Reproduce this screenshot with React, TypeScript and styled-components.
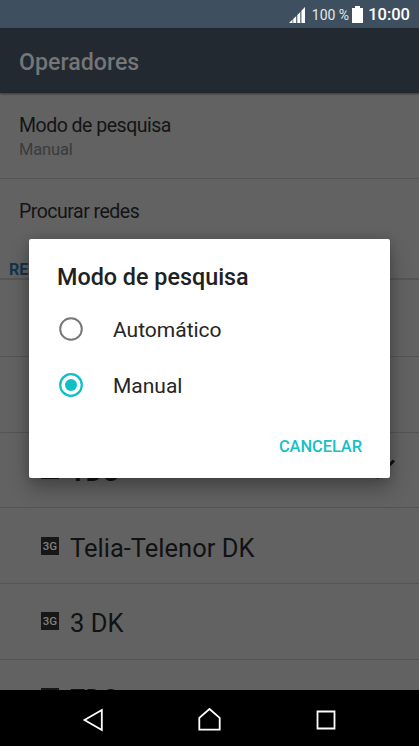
import React from "react";
import styled, { createGlobalStyle } from "styled-components";

const GlobalStyle = createGlobalStyle`
  * { box-sizing: border-box; }
  body { margin: 0; background: #000; font-family: Roboto, sans-serif; }
`;

const Screen = styled.div`
  position: relative;
  width: 419px;
  height: 746px;
  overflow: hidden;
  display: flex;
  flex-direction: column;
  background: #626262;
`;

const StatusBar = styled.header`
  height: 28px;
  flex: none;
  display: flex;
  align-items: center;
  justify-content: flex-end;
  padding-right: 9px;
  background: #3e505f;
  color: #fff;
`;

const BatteryLevel = styled.span`
  margin: 2px 3px 0 6px;
  font-size: 14px;
  line-height: 20px;
  white-space: nowrap;
  color: #e4e8ea;
`;

const Clock = styled.span`
  margin: 2px 0 0 5px;
  font-size: 16.5px;
  font-weight: 500;
  line-height: 20px;
`;

const AppBar = styled.div`
  height: 65px;
  flex: none;
  display: flex;
  align-items: center;
  padding: 3px 19px 0;
  background: #222930;
  box-shadow: 0 1px 2px rgba(0, 0, 0, 0.45);
  z-index: 1;
`;

const AppTitle = styled.h1`
  margin: 0;
  font-size: 23.2px;
  font-weight: 500;
  color: #747678;
`;

const Content = styled.main`
  flex: 1;
  min-height: 0;
  overflow: hidden;
`;

const Preference = styled.div<{ $height: number; $line?: boolean }>`
  height: ${(p) => p.$height}px;
  padding: 21px 19px 0;
  border-bottom: ${(p) => (p.$line ? "1px solid #545454" : "none")};
`;

const PreferenceTitle = styled.div`
  font-size: 19.5px;
  letter-spacing: -0.5px;
  line-height: 24px;
  color: #141414;
`;

const PreferenceSummary = styled.div`
  padding-top: 1px;
  font-size: 16.5px;
  letter-spacing: -0.15px;
  line-height: 22px;
  color: #3b3b3b;
`;

const SectionHeader = styled.div`
  height: 21px;
  padding-left: 9px;
  border-bottom: 2px solid #555;
  font-size: 16px;
  font-weight: 700;
  line-height: 22px;
  color: #15334a;
`;

const NetworkRow = styled.div`
  height: 75.75px;
  display: flex;
  align-items: center;
  padding: 1px 23px 0 41px;
  border-bottom: 1px solid #545454;

  &:first-of-type { margin-top: 1px; }
`;

const NetworkList = styled.div`
  display: flow-root;
`;

const NetworkBadge = styled.span`
  width: 18px;
  height: 18px;
  margin: 0 11px 1px 0;
  background: #171717;
  color: #808080;
  font-size: 11.5px;
  font-weight: 500;
  line-height: 19px;
  text-align: center;
`;

const NetworkName = styled.span<{ $bold?: boolean }>`
  flex: 1;
  padding-top: 3px;
  font-size: 25.5px;
  font-weight: ${(p) => (p.$bold ? 700 : 400)};
  line-height: 32px;
  color: #121212;
`;

const NavBar = styled.nav`
  height: 56px;
  flex: none;
  background: #000;
  svg { display: block; }
`;

const Dialog = styled.section`
  position: absolute;
  left: 29px;
  top: 239px;
  width: 361px;
  height: 239px;
  z-index: 2;
  display: flex;
  flex-direction: column;
  padding: 22px 28px 0;
  border-radius: 2px;
  background: #fff;
  box-shadow: 0 10px 20px rgba(0, 0, 0, 0.3), 0 0 8px rgba(0, 0, 0, 0.15);
`;

const DialogTitle = styled.h2`
  margin: 0 0 10px;
  font-size: 23.35px;
  font-weight: 500;
  line-height: 32px;
  color: #212121;
`;

const Option = styled.div`
  height: 56px;
  flex: none;
  display: flex;
  align-items: center;
  gap: 29px;
  padding: 0 0 4px 1px;
  color: #252525;
`;

const OptionLabel = styled.span`
  padding-top: 2px;
  font-size: 21px;
  line-height: 26px;
`;

const CancelButton = styled.button`
  align-self: flex-end;
  margin-top: 20px;
  padding: 0;
  border: 0;
  background: none;
  font: 500 16.5px/24px Roboto, sans-serif;
  letter-spacing: -0.1px;
  color: #16c0c8;
`;

const SignalIcon = () => (
  <svg width="18" height="17" viewBox="0 0 18 17" fill="#fff">
    <path d="M1 17L4.5 13.6V17ZM5.2 13L8.2 10V17H5.2ZM9.3 9L12.3 6V17H9.3ZM13.4 4.8L17 1V17H13.4Z" />
  </svg>
);

const BatteryIcon = () => (
  <svg width="11" height="17" viewBox="0 0 11 17" fill="#fff">
    <path d="M3 0H8V2H11V17H0V2H3Z" />
  </svg>
);

const RadioIcon = ({ checked }: { checked?: boolean }) => {
  const color = checked ? "#0fbfc7" : "#777";
  return (
    <svg width="26" height="26" viewBox="0 0 26 26" fill="none">
      <circle cx="13" cy="13" r="10.8" stroke={color} strokeWidth={checked ? 2.2 : 2} />
      {checked && <circle cx="13" cy="13" r="6" fill={color} />}
    </svg>
  );
};

const CheckIcon = () => (
  <svg width="26" height="24" viewBox="0 0 26 24" fill="none" stroke="#111" strokeWidth="3">
    <path d="M2 14L7.5 19L24 2.5" />
  </svg>
);

const NavIcons = () => (
  <svg width="419" height="56" viewBox="0 0 419 56" fill="none" stroke="#fff" strokeWidth="1.8">
    <path d="M84.5 30L101.8 20V40Z" />
    <path d="M199.3 39.6V27.8L209.5 19L219.7 27.8V39.6Z" />
    <path d="M317.5 21.5H334.5V38.5H317.5Z" />
  </svg>
);

const networks = [
  { name: "TDC", selected: true },
  { name: "Telia-Telenor DK" },
  { name: "3 DK" },
  { name: "TDC" },
];

export default function App() {
  return (
    <>
      <GlobalStyle />
      <Screen>
        <StatusBar>
          <SignalIcon />
          <BatteryLevel>100 %</BatteryLevel>
          <BatteryIcon />
          <Clock>10:00</Clock>
        </StatusBar>
        <AppBar>
          <AppTitle>Operadores</AppTitle>
        </AppBar>
        <Content>
          <Preference $height={86} $line>
            <PreferenceTitle>Modo de pesquisa</PreferenceTitle>
            <PreferenceSummary>Manual</PreferenceSummary>
          </Preference>
          <Preference $height={80}>
            <PreferenceTitle>Procurar redes</PreferenceTitle>
          </Preference>
          <SectionHeader>REDES</SectionHeader>
          <NetworkList>
            <NetworkRow />
            <NetworkRow />
            {networks.map((network, index) => (
              <NetworkRow key={index}>
                <NetworkBadge>3G</NetworkBadge>
                <NetworkName $bold={network.selected}>{network.name}</NetworkName>
                {network.selected && <CheckIcon />}
              </NetworkRow>
            ))}
          </NetworkList>
        </Content>
        <NavBar>
          <NavIcons />
        </NavBar>
        <Dialog role="dialog" aria-label="Modo de pesquisa">
          <DialogTitle>Modo de pesquisa</DialogTitle>
          <Option>
            <RadioIcon />
            <OptionLabel>Automático</OptionLabel>
          </Option>
          <Option>
            <RadioIcon checked />
            <OptionLabel>Manual</OptionLabel>
          </Option>
          <CancelButton>CANCELAR</CancelButton>
        </Dialog>
      </Screen>
    </>
  );
}
